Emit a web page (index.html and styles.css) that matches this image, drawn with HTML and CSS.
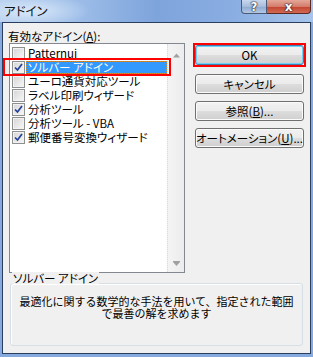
FILE: index.html
```html
<!DOCTYPE html>
<html>
<head>
<meta charset="utf-8">
<link rel="stylesheet" href="styles.css">
</head>
<body>
<div class="window">
  <div class="titlebar">
    <span class="title">アドイン</span>
    <div class="caption">
      <span class="cap-btn help">?</span>
      <span class="cap-btn close">x</span>
    </div>
  </div>

  <div class="client">
    <div class="main">
      <div class="list-col">
        <div class="label">有効なアドイン(<u>A</u>):</div>
        <div class="listbox">
          <div class="items">
            <div class="row"><span class="check"></span><span class="text">Patternui</span></div>
            <div class="row"><span class="check"><svg viewBox="0 0 11 11"><path d="M2 5.5 L4.5 8 L9 2"/></svg></span><span class="text selected">ソルバー アドイン</span></div>
            <div class="row"><span class="check"></span><span class="text">ユーロ通貨対応ツール</span></div>
            <div class="row"><span class="check"></span><span class="text">ラベル印刷ウィザード</span></div>
            <div class="row"><span class="check"><svg viewBox="0 0 11 11"><path d="M2 5.5 L4.5 8 L9 2"/></svg></span><span class="text">分析ツール</span></div>
            <div class="row"><span class="check"></span><span class="text">分析ツール - VBA</span></div>
            <div class="row"><span class="check"><svg viewBox="0 0 11 11"><path d="M2 5.5 L4.5 8 L9 2"/></svg></span><span class="text">郵便番号変換ウィザード</span></div>
          </div>
          <div class="scrollbar">
            <svg class="arrow" viewBox="0 0 7 4"><path d="M0 4 L3.5 0 L7 4 Z"/></svg>
            <svg class="arrow" viewBox="0 0 7 5"><path d="M0 0 H7 V1 H0 Z M0 1 L3.5 5 L7 1 Z"/></svg>
          </div>
          <div class="mark mark-row"></div>
        </div>
      </div>

      <div class="btn-col">
        <div class="mark mark-ok">
          <button class="btn default">OK</button>
        </div>
        <button class="btn">キャンセル</button>
        <button class="btn">参照(<u>B</u>)...</button>
        <button class="btn">オートメーション(<u>U</u>)...</button>
      </div>
    </div>

    <div class="group">
      <span class="group-label">ソルバー アドイン</span>
      <p class="desc">最適化に関する数学的な手法を用いて、指定された範囲で最善の解を求めます</p>
    </div>
  </div>
</div>
</body>
</html>
```

FILE: styles.css
```css
body {
  margin: 0;
  font-family: "Noto Sans CJK JP", "Liberation Sans", sans-serif;
  font-size: 11.5px;
  font-feature-settings: "palt";
  color: #000;
}

.window {
  width: 313px;
  height: 357px;
  box-sizing: border-box;
  padding-bottom: 3px;
  display: flex;
  flex-direction: column;
  background: #86a9de;
}

/* title bar */
.titlebar {
  height: 22px;
  flex: none;
  display: flex;
  justify-content: space-between;
  align-items: flex-start;
  background:
    radial-gradient(ellipse 60px 16px at 30px 11px, rgba(222, 236, 250, 0.9), rgba(222, 236, 250, 0) 100%),
    linear-gradient(90deg, #b3cdee 0%, #9dbde8 25%, #7ea4dc 50%, #8aaee2 75%, #a7c5ec 100%);
}
.title {
  padding-left: 4px;
  line-height: 22px;
  font-size: 12.5px;
  color: #111;
}
.caption {
  display: flex;
  margin-right: 2px;
}
.cap-btn {
  height: 14px;
  box-sizing: border-box;
  display: flex;
  justify-content: center;
  align-items: center;
  color: #fff;
  font-family: "DejaVu Sans", sans-serif;
  font-weight: bold;
  font-size: 12px;
  line-height: 12px;
  text-shadow: 0 0 1px #223, 0 0 1px #223, 0 0 2px #223;
}
.help {
  width: 26px;
  border: 1px solid #4a5a74;
  border-top: none;
  border-radius: 0 0 0 4px;
  background: linear-gradient(#c8d8ee 0%, #a7bcdc 50%, #8ea8ce 51%, #b2c8e6 100%);
}
.close {
  width: 44px;
  border: 1px solid #5a2a24;
  border-top: none;
  border-left: none;
  border-radius: 0 0 4px 0;
  background: linear-gradient(#e4a898 0%, #d47c6c 50%, #c2432f 51%, #d26a54 100%);
}

/* client area */
.client {
  flex: 1;
  margin: 0 2px;
  border: 1px solid #2a3f5f;
  background: #f0f0f0;
  padding: 7px 0 6px 6px;
  display: flex;
  flex-direction: column;
}
.main {
  display: flex;
  align-items: flex-start;
}
.list-col {
  width: 176px;
}
.label {
  height: 13px;
  line-height: 13px;
  margin-left: -1px;
}
.label u,
.btn u {
  text-underline-offset: 1px;
}

.listbox {
  position: relative;
  height: 230px;
  box-sizing: border-box;
  border: 1px solid #828790;
  background: #fff;
  display: flex;
}
.items {
  flex: 1;
  padding-top: 2px;
}
.row {
  height: 14px;
  display: flex;
  align-items: center;
  padding-left: 2px;
}
.check {
  width: 13px;
  height: 13px;
  box-sizing: border-box;
  border: 1px solid #8e8f8f;
  background: linear-gradient(135deg, #d4d4d4, #f8f8f8);
  box-shadow: inset 0 0 0 1px #f2f2f2;
  display: flex;
  flex: none;
}
.check svg {
  width: 11px;
  height: 11px;
}
.check path {
  fill: none;
  stroke: #23429a;
  stroke-width: 1.7;
}
.text {
  flex: 1;
  height: 13px;
  line-height: 13px;
  margin-left: 1px;
  padding-left: 2px;
  white-space: nowrap;
}
.selected {
  background: #3399ff;
  color: #fff;
  outline: 1px dotted #d08a30;
  outline-offset: -1px;
}

.scrollbar {
  width: 17px;
  box-sizing: border-box;
  border-left: 1px dotted #dcdcdc;
  background: linear-gradient(90deg, #f4f4f4, #ececec);
  display: flex;
  flex-direction: column;
  justify-content: space-between;
  align-items: center;
  padding: 9px 0 6px;
}
.arrow {
  width: 7px;
  height: 5px;
}
.arrow path {
  fill: #a0a0a0;
}

/* red annotation frames */
.mark {
  border: 2px solid #ff0000;
  box-sizing: border-box;
}
.mark-row {
  position: absolute;
  left: -7px;
  top: 14px;
  width: 168px;
  height: 18px;
}

/* buttons */
.btn-col {
  margin: 13px 0 0 8px;
  display: flex;
  flex-direction: column;
  align-items: flex-start;
}
.mark-ok {
  width: 113px;
  height: 24px;
  margin-bottom: 7px;
}
.btn {
  width: 109px;
  height: 20px;
  margin: 0 0 7px 2px;
  padding: 0;
  box-sizing: border-box;
  border: 1px solid #707070;
  border-radius: 3px;
  background: linear-gradient(#f2f2f2 0%, #ebebeb 50%, #dddddd 51%, #cfcfcf 100%);
  box-shadow: inset 0 0 0 1px #fbfbfb;
  font-family: inherit;
  font-size: 11.5px;
  font-feature-settings: "palt";
  line-height: 16px;
  white-space: nowrap;
  color: #000;
}
.btn.default {
  margin: 0;
  border-color: #3c7fb1;
  box-shadow: inset 0 0 0 1px #6fd0f8;
}

/* group box */
.group {
  position: relative;
  margin: 10px 0 0 1px;
  width: 293px;
  height: 63px;
  box-sizing: border-box;
  border: 1px solid #d5dfe5;
  border-radius: 3px;
  box-shadow: inset 1px 1px 0 #fff;
}
.group-label {
  position: absolute;
  top: -12px;
  left: 1px;
  padding: 0 1px;
  line-height: 12px;
  background: #f0f0f0;
}
.desc {
  margin: 0;
  padding: 11px 6px 0;
  text-align: center;
  line-height: 12px;
  font-size: 11px;
  font-feature-settings: normal;
}
```
